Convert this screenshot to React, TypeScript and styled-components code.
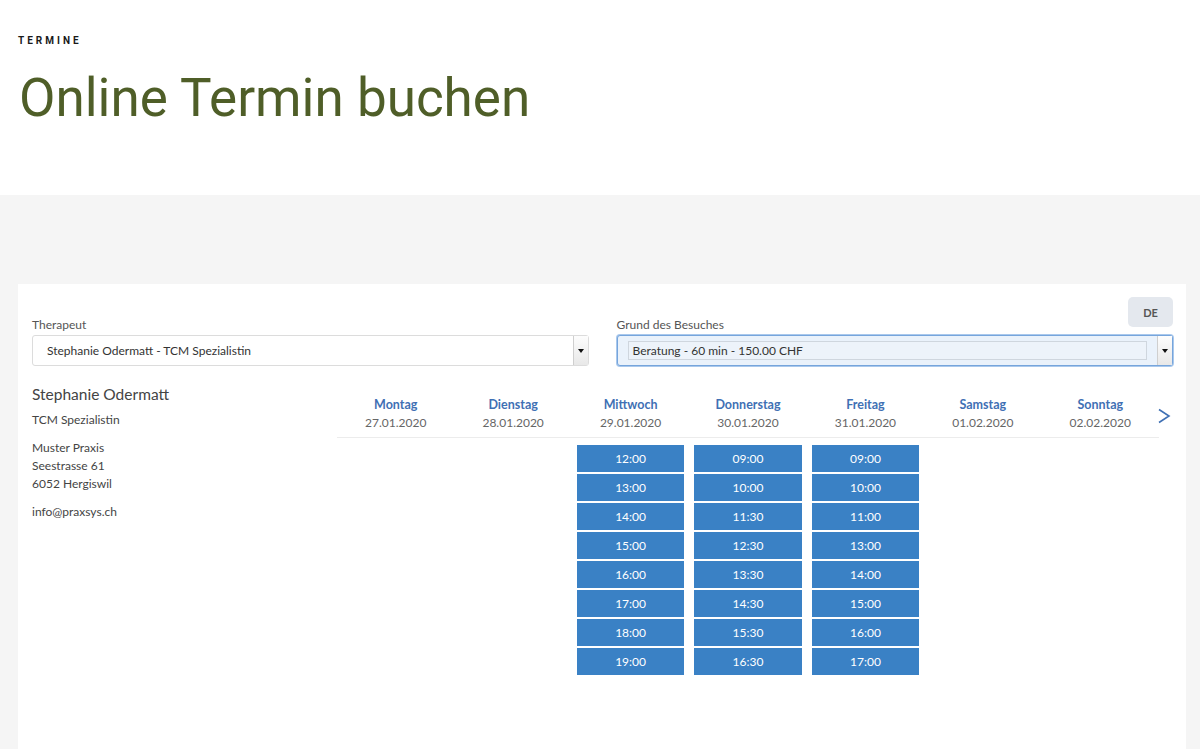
import styled, { createGlobalStyle } from "styled-components";

const GlobalStyle = createGlobalStyle`
  body {
    margin: 0;
    background: #f5f5f5;
    font-family: Lato, "Open Sans", sans-serif;
  }
`;

const Header = styled.header`
  background: #ffffff;
  height: 195px;
  padding: 35px 18px 0;
  box-sizing: border-box;
`;

const Eyebrow = styled.div`
  font-family: Roboto, sans-serif;
  font-size: 10px;
  font-weight: 700;
  letter-spacing: 3px;
  color: #1a1a1a;
`;

const Title = styled.h1`
  margin: 26px 0 0 1px;
  font-family: Roboto, sans-serif;
  font-weight: 400;
  font-size: 53px;
  line-height: 1;
  color: #4f5e28;
`;

const Section = styled.section`
  padding: 89px 14px 0 18px;
`;

const Panel = styled.div`
  background: #ffffff;
  min-height: 465px;
  padding: 13px 13px 0 14px;
  box-sizing: border-box;
`;

const FormRow = styled.div`
  display: grid;
  grid-template-columns: 1fr 1fr;
  column-gap: 28px;
`;

const Field = styled.div`
  display: flex;
  flex-direction: column;
`;

const FieldHead = styled.div`
  height: 38px;
  display: flex;
  justify-content: space-between;
  align-items: flex-end;
`;

const Label = styled.label`
  font-size: 12px;
  color: #555;
  margin-bottom: 3px;
`;

const LangButton = styled.button`
  align-self: flex-start;
  width: 45px;
  height: 30px;
  border: none;
  border-radius: 5px;
  background: #e4e8ee;
  color: #555;
  font-family: inherit;
  font-size: 11px;
  font-weight: 700;
`;

const Select = styled.div<{ $focused?: boolean }>`
  height: 31px;
  box-sizing: border-box;
  display: flex;
  align-items: stretch;
  border: 1px solid ${(p) => (p.$focused ? "#76a5dc" : "#dcdcdc")};
  border-radius: 3px;
  background: ${(p) => (p.$focused ? "#eaf2fb" : "#ffffff")};
  box-shadow: ${(p) => (p.$focused ? "0 0 0 1px #a9c8ec" : "none")};
  font-size: 12px;
  color: #333;
`;

const SelectValue = styled.div<{ $focused?: boolean }>`
  flex: 1;
  display: flex;
  align-items: center;
  ${(p) =>
    p.$focused
      ? `margin: 5px 10px 5px 10px;
         padding-left: 4px;
         border: 1px solid #cfd6de;
         background: #edf3fa;`
      : `padding-left: 14px;`}
`;

const SelectArrow = styled.div`
  width: 14px;
  border-left: 1px solid #cfcfcf;
  background: linear-gradient(#fdfdfd, #e8e8e8);
  display: flex;
  align-items: center;
  justify-content: center;
  &::after {
    content: "";
    border-left: 3px solid transparent;
    border-right: 3px solid transparent;
    border-top: 4px solid #111;
  }
`;

const Body = styled.div`
  display: flex;
  margin-top: 17px;
`;

const Info = styled.div`
  width: 305px;
  flex-shrink: 0;
  font-size: 12px;
  color: #444;
  line-height: 18px;
`;

const Name = styled.div`
  font-size: 15.5px;
  padding-top: 2px;
  margin-bottom: 8px;
`;

const InfoBlock = styled.div`
  margin-bottom: 10px;
`;

const Calendar = styled.div`
  width: 822px;
  flex-shrink: 0;
  padding-top: 12px;
`;

const DayRow = styled.div`
  display: grid;
  grid-template-columns: repeat(7, 1fr);
  border-bottom: 1px solid #ececec;
  padding-bottom: 5px;
  padding-top: 1px;
`;

const DayHead = styled.div`
  text-align: center;
  line-height: 18px;
`;

const DayName = styled.div`
  font-size: 12.5px;
  font-weight: 700;
  color: #3f70b4;
`;

const DayDate = styled.div`
  font-size: 12px;
  color: #666;
`;

const SlotGrid = styled.div`
  display: grid;
  grid-template-columns: repeat(7, 1fr);
  margin-top: 7px;
`;

const SlotCol = styled.div`
  display: flex;
  flex-direction: column;
  gap: 2px;
  padding: 0 5px;
`;

const Slot = styled.button`
  height: 27px;
  border: none;
  background: #3a81c5;
  color: #fff;
  font-family: inherit;
  font-size: 12px;
  padding: 0;
`;

const NextArrow = styled.div`
  padding-top: 25px;
  margin-left: -2px;
  color: #3f70b4;
`;

const days = [
  { name: "Montag", date: "27.01.2020", slots: [] as string[] },
  { name: "Dienstag", date: "28.01.2020", slots: [] },
  {
    name: "Mittwoch",
    date: "29.01.2020",
    slots: ["12:00", "13:00", "14:00", "15:00", "16:00", "17:00", "18:00", "19:00"],
  },
  {
    name: "Donnerstag",
    date: "30.01.2020",
    slots: ["09:00", "10:00", "11:30", "12:30", "13:30", "14:30", "15:30", "16:30"],
  },
  {
    name: "Freitag",
    date: "31.01.2020",
    slots: ["09:00", "10:00", "11:00", "13:00", "14:00", "15:00", "16:00", "17:00"],
  },
  { name: "Samstag", date: "01.02.2020", slots: [] },
  { name: "Sonntag", date: "02.02.2020", slots: [] },
];

function App() {
  return (
    <>
      <GlobalStyle />
      <Header>
        <Eyebrow>TERMINE</Eyebrow>
        <Title>Online Termin buchen</Title>
      </Header>
      <Section>
        <Panel>
          <FormRow>
            <Field>
              <FieldHead>
                <Label>Therapeut</Label>
              </FieldHead>
              <Select>
                <SelectValue>Stephanie Odermatt - TCM Spezialistin</SelectValue>
                <SelectArrow />
              </Select>
            </Field>
            <Field>
              <FieldHead>
                <Label>Grund des Besuches</Label>
                <LangButton>DE</LangButton>
              </FieldHead>
              <Select $focused>
                <SelectValue $focused>Beratung - 60 min - 150.00 CHF</SelectValue>
                <SelectArrow />
              </Select>
            </Field>
          </FormRow>
          <Body>
            <Info>
              <Name>Stephanie Odermatt</Name>
              <InfoBlock>TCM Spezialistin</InfoBlock>
              <InfoBlock>
                Muster Praxis
                <br />
                Seestrasse 61
                <br />
                6052 Hergiswil
              </InfoBlock>
              <InfoBlock>info@praxsys.ch</InfoBlock>
            </Info>
            <Calendar>
              <DayRow>
                {days.map((d) => (
                  <DayHead key={d.name}>
                    <DayName>{d.name}</DayName>
                    <DayDate>{d.date}</DayDate>
                  </DayHead>
                ))}
              </DayRow>
              <SlotGrid>
                {days.map((d) => (
                  <SlotCol key={d.name}>
                    {d.slots.map((s) => (
                      <Slot key={s}>{s}</Slot>
                    ))}
                  </SlotCol>
                ))}
              </SlotGrid>
            </Calendar>
            <NextArrow>
              <svg width="14" height="16" viewBox="0 0 14 16">
                <polyline
                  points="2,1.5 12,8 2,14.5"
                  fill="none"
                  stroke="currentColor"
                  strokeWidth="1.6"
                />
              </svg>
            </NextArrow>
          </Body>
        </Panel>
      </Section>
    </>
  );
}

export default App;
